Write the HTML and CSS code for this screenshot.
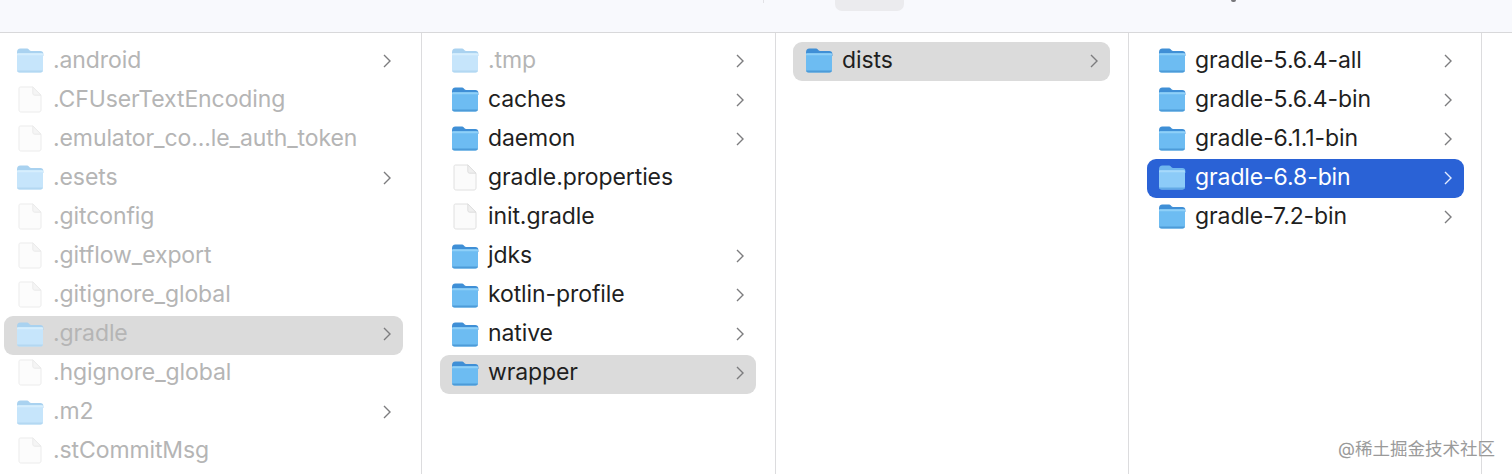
FILE: index.html

```html
<!DOCTYPE html>
<html lang="en">
<head>
  <meta charset="UTF-8" />
  <title>Finder</title>
  <link rel="stylesheet" href="styles.css">
</head>
<body>
  <svg class="defs" width="0" height="0">
    <symbol id="folder" viewBox="0 0 28 26">
      <path d="M1 5.500C1 3 2.200 1.600 4.400 1.600h5.800c1.500 0 2.200.5 3.100 1.400.7.8 1.300 1.100 2.400 1.100h8.600c1.900 0 3.100 1.200 3.100 3.200V9H1z" fill="var(--tab)"/>
      <path d="M1 7.400c0-.8.6-1.200 1.300-1.200h23.400c.8 0 1.300.5 1.300 1.200v15.200c0 1.900-1.100 3-3 3H4c-1.900 0-3-1.100-3-3z" fill="var(--body)"/>
      <path d="M1 7.400c0-.8.6-1.200 1.300-1.200h23.400c.8 0 1.300.5 1.300 1.200v.9H1z" fill="var(--lip)"/>
      <path d="M1 23.400c.2 1.400 1.300 2.200 3 2.200h20c1.700 0 2.800-.8 3-2.200z" fill="var(--base)"/>
    </symbol>
    <symbol id="file" viewBox="0 0 24 27">
      <path d="M2.500 1h12.300L23 9.200v14.600c0 1.400-.8 2.200-2.200 2.200H3.200C1.800 26 1 25.200 1 23.800V2.500C1 1.600 1.600 1 2.500 1z" fill="#fbfbfb" stroke="#dcdcdc" stroke-width=".9"/>
      <path d="M14.800 1v6.200c0 1.300.7 2 2 2H23z" fill="#efefef" stroke="#dcdcdc" stroke-width=".9"/>
    </symbol>
    <symbol id="chev" viewBox="0 0 8 14">
      <path d="M1 1l6 6-6 6" fill="none" stroke="currentColor" stroke-width="1.400"/>
    </symbol>
  </svg>

  <header class="toolbar">
    <span class="tick"></span>
    <span class="tab"></span>
    <span class="speck"></span>
  </header>

  <main class="browser">
    <section class="col col-1">
      <div class="row dim"><svg class="ico"><use href="#folder"/></svg><span class="name">.android</span><svg class="chev"><use href="#chev"/></svg></div>
      <div class="row dim"><svg class="ico doc"><use href="#file"/></svg><span class="name">.CFUserTextEncoding</span></div>
      <div class="row dim"><svg class="ico doc"><use href="#file"/></svg><span class="name">.emulator_co...le_auth_token</span></div>
      <div class="row dim"><svg class="ico"><use href="#folder"/></svg><span class="name">.esets</span><svg class="chev"><use href="#chev"/></svg></div>
      <div class="row dim"><svg class="ico doc"><use href="#file"/></svg><span class="name">.gitconfig</span></div>
      <div class="row dim"><svg class="ico doc"><use href="#file"/></svg><span class="name">.gitflow_export</span></div>
      <div class="row dim"><svg class="ico doc"><use href="#file"/></svg><span class="name">.gitignore_global</span></div>
      <div class="row dim open"><svg class="ico"><use href="#folder"/></svg><span class="name">.gradle</span><svg class="chev"><use href="#chev"/></svg></div>
      <div class="row dim"><svg class="ico doc"><use href="#file"/></svg><span class="name">.hgignore_global</span></div>
      <div class="row dim"><svg class="ico"><use href="#folder"/></svg><span class="name">.m2</span><svg class="chev"><use href="#chev"/></svg></div>
      <div class="row dim"><svg class="ico doc"><use href="#file"/></svg><span class="name">.stCommitMsg</span></div>
    </section>

    <section class="col col-2">
      <div class="row dim"><svg class="ico"><use href="#folder"/></svg><span class="name">.tmp</span><svg class="chev"><use href="#chev"/></svg></div>
      <div class="row"><svg class="ico"><use href="#folder"/></svg><span class="name">caches</span><svg class="chev"><use href="#chev"/></svg></div>
      <div class="row"><svg class="ico"><use href="#folder"/></svg><span class="name">daemon</span><svg class="chev"><use href="#chev"/></svg></div>
      <div class="row"><svg class="ico doc"><use href="#file"/></svg><span class="name">gradle.properties</span></div>
      <div class="row"><svg class="ico doc"><use href="#file"/></svg><span class="name">init.gradle</span></div>
      <div class="row"><svg class="ico"><use href="#folder"/></svg><span class="name">jdks</span><svg class="chev"><use href="#chev"/></svg></div>
      <div class="row"><svg class="ico"><use href="#folder"/></svg><span class="name">kotlin-profile</span><svg class="chev"><use href="#chev"/></svg></div>
      <div class="row"><svg class="ico"><use href="#folder"/></svg><span class="name">native</span><svg class="chev"><use href="#chev"/></svg></div>
      <div class="row open"><svg class="ico"><use href="#folder"/></svg><span class="name">wrapper</span><svg class="chev"><use href="#chev"/></svg></div>
    </section>

    <section class="col col-3">
      <div class="row open"><svg class="ico"><use href="#folder"/></svg><span class="name">dists</span><svg class="chev"><use href="#chev"/></svg></div>
    </section>

    <section class="col col-4">
      <div class="row"><svg class="ico"><use href="#folder"/></svg><span class="name">gradle-5.6.4-all</span><svg class="chev"><use href="#chev"/></svg></div>
      <div class="row"><svg class="ico"><use href="#folder"/></svg><span class="name">gradle-5.6.4-bin</span><svg class="chev"><use href="#chev"/></svg></div>
      <div class="row"><svg class="ico"><use href="#folder"/></svg><span class="name">gradle-6.1.1-bin</span><svg class="chev"><use href="#chev"/></svg></div>
      <div class="row active"><svg class="ico"><use href="#folder"/></svg><span class="name">gradle-6.8-bin</span><svg class="chev"><use href="#chev"/></svg></div>
      <div class="row"><svg class="ico"><use href="#folder"/></svg><span class="name">gradle-7.2-bin</span><svg class="chev"><use href="#chev"/></svg></div>
    </section>

    <section class="col col-5"></section>
  </main>

  <div class="watermark">@稀土掘金技术社区</div>
</body>
</html>
```

FILE: styles.css

```css
html, body {
  margin: 0;
  height: 474px;
  overflow: hidden;
}
body {
  font-family: Inter, "Noto Sans CJK SC", sans-serif;
  background-color: #fff;
  color: #262626;
}
.defs {
  position: absolute;
}
.toolbar {
  position: relative;
  height: 32px;
  background-color: #f8f9fd;
  border-bottom: 1px solid #d8d8da;
}
.tick {
  position: absolute;
  left: 763px;
  top: 0;
  width: 1px;
  height: 3px;
  background-color: #e2e2e6;
}
.tab {
  position: absolute;
  left: 835px;
  top: 0;
  width: 69px;
  height: 11px;
  background-color: #ebebee;
  border-radius: 0 0 7px 7px;
}
.speck {
  position: absolute;
  left: 1231px;
  top: 0;
  width: 5px;
  height: 2px;
  background-color: #77777a;
  border-radius: 0 0 3px 3px;
}
.browser {
  display: flex;
  height: 441px;
}
.col {
  box-sizing: border-box;
  flex: none;
  padding: 9px 18px 0 4px;
  border-right: 1px solid #dcdcde;
  overflow: hidden;
}
.col-1 { width: 422px; padding-right: 18px; }
.col-2 { width: 354px; padding-left: 18px; padding-right: 19px; }
.col-3 { width: 353px; padding-left: 17px; padding-right: 18px; }
.col-4 { width: 353px; padding-left: 18px; padding-right: 17px; }
.col-5 { flex: 1; border-right: none; }
.col-1 .ico, .col-3 .ico {
  margin-left: 1px;
}
.row {
  --tab: #3f8fd6;
  --body: #6dbcf2;
  --lip: #8fd0f8;
  --base: #4d9bd8;
  display: flex;
  align-items: center;
  height: 39.1px;
  padding: 0 12px 0 11px;
  border-radius: 9px;
  font-size: 23px;
  letter-spacing: -0.1px;
  white-space: nowrap;
  color: #1f1f1f;
}
.ico {
  flex: none;
  width: 28px;
  height: 26px;
  margin-right: 9px;
  margin-bottom: 3px;
}
.ico.doc {
  width: 24px;
  height: 27px;
  padding-left: 2px;
  padding-right: 2px;
}
.name {
  flex: 1;
  padding-bottom: 4px;
}
.chev {
  flex: none;
  width: 8px;
  height: 14px;
  margin-bottom: 2px;
  color: #7c7c7e;
}
.dim {
  --tab: #a9d2f0;
  --body: #c6e5fb;
  --lip: #d6eefd;
  --base: #b3d8f2;
}
.dim .name {
  color: #b5b5b5;
}
.dim .ico.doc {
  opacity: 0.6;
}
.open {
  background-color: #dbdbdb;
}
.active {
  --tab: #6fb6ee;
  --body: #8ccbf8;
  --lip: #a6d9fb;
  --base: #62a9e6;
  background-color: #2a62d6;
}
.active .name {
  color: #fff;
}
.active .chev {
  color: #e4ecff;
}
.watermark {
  position: absolute;
  left: 1338px;
  top: 435px;
  font-size: 17.5px;
  color: #9a9a9a;
  white-space: nowrap;
}
```
